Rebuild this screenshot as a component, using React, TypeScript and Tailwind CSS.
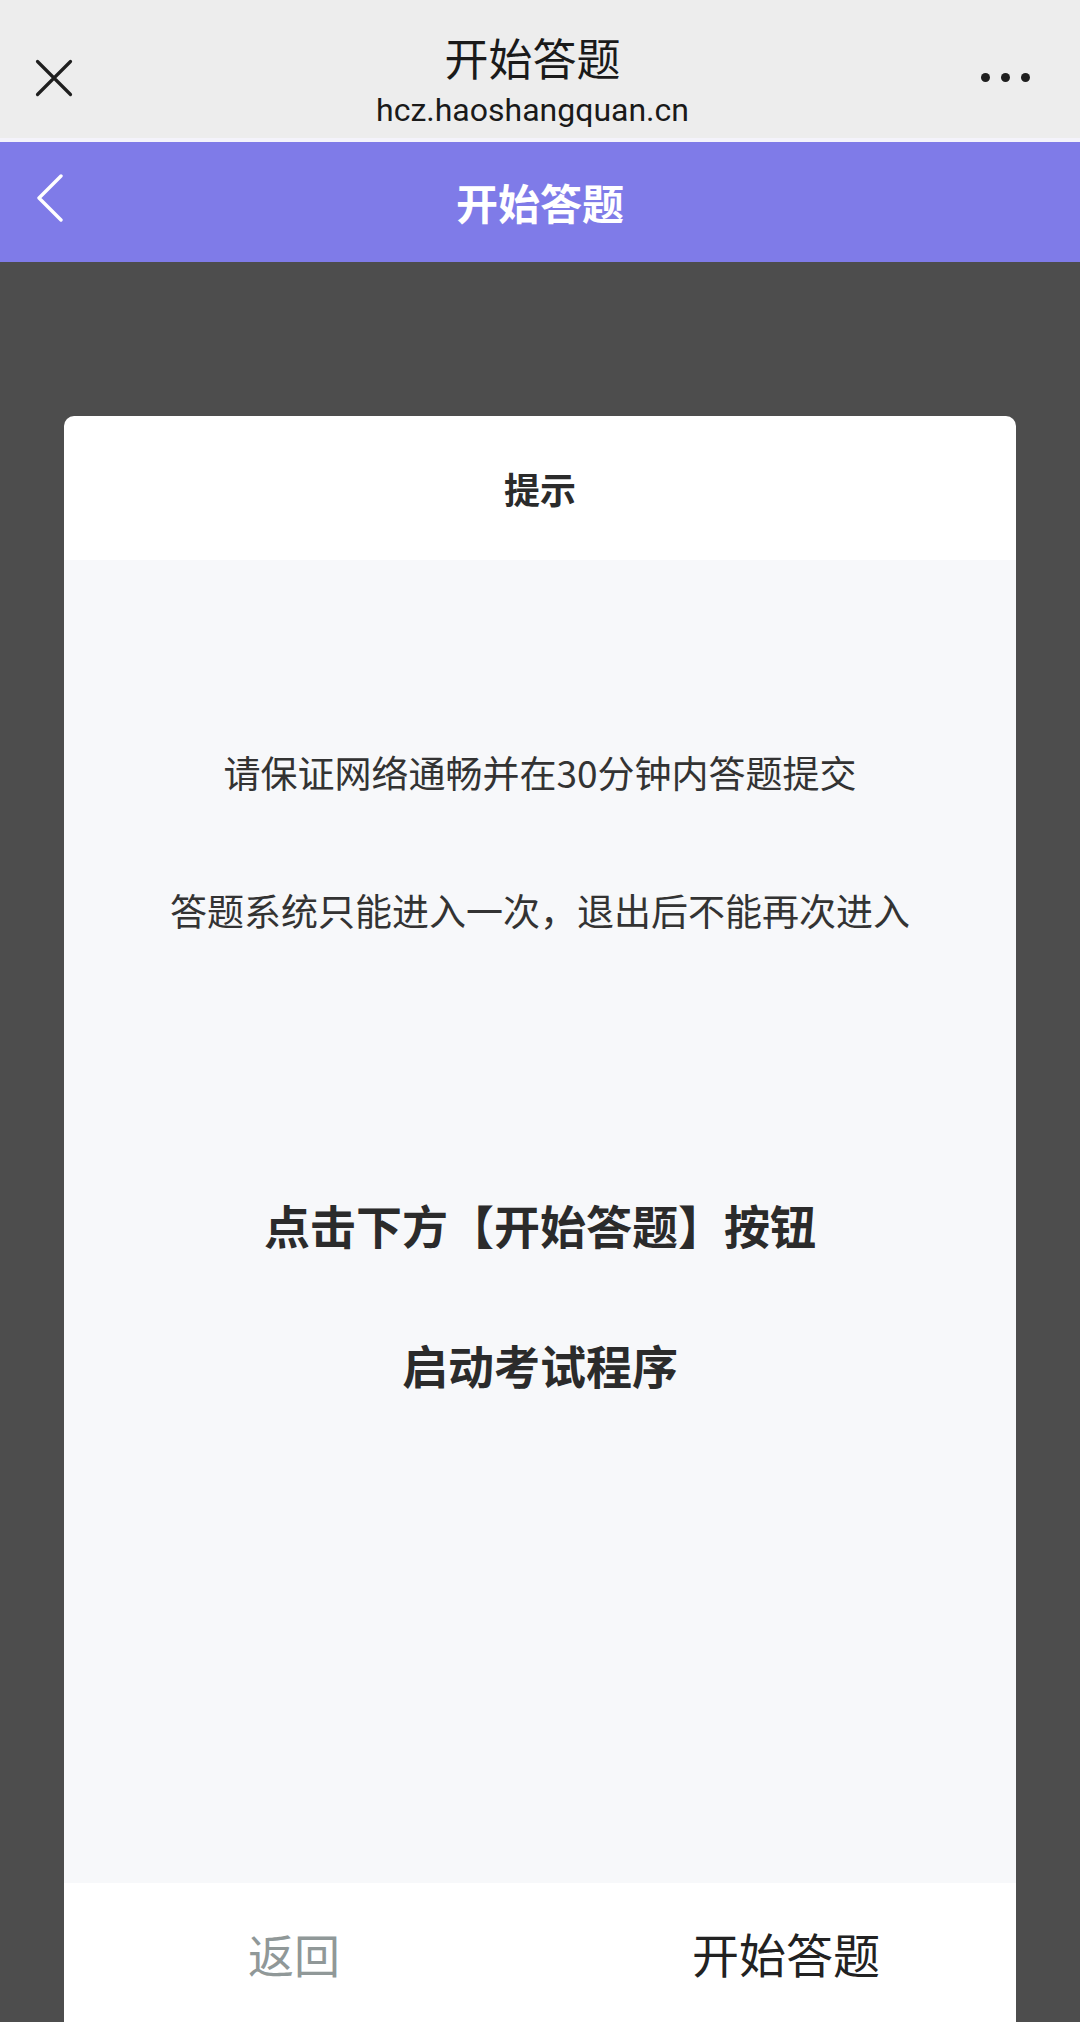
const cjk = "font-['Noto_Sans_CJK_SC','Noto_Sans',sans-serif]";

function CloseIcon() {
  return (
    <svg width="38" height="38" viewBox="0 0 38 38" fill="none" stroke="#1f1f1f" strokeWidth="3.2" strokeLinecap="round">
      <path d="M2.5 2.5 L35.5 35.5 M35.5 2.5 L2.5 35.5" />
    </svg>
  );
}

function BackIcon() {
  return (
    <svg width="28" height="48" viewBox="0 0 28 48" fill="none" stroke="#ffffff" strokeWidth="3.4" strokeLinecap="round" strokeLinejoin="round">
      <path d="M25 2 L3 24 L25 46" />
    </svg>
  );
}

function MoreIcon() {
  return (
    <div className="flex items-center gap-[11px]">
      <span className="h-[9px] w-[9px] rounded-full bg-[#1f1f1f]" />
      <span className="h-[9px] w-[9px] rounded-full bg-[#1f1f1f]" />
      <span className="h-[9px] w-[9px] rounded-full bg-[#1f1f1f]" />
    </div>
  );
}

export default function App() {
  return (
    <div className={`flex h-[2022px] w-[1080px] flex-col overflow-hidden bg-[#4d4d4d] ${cjk}`}>
      {/* WeChat browser bar */}
      <header className="flex h-[138px] shrink-0 items-start justify-between bg-[#ededed] pl-[35px] pr-[50px]">
        <div className="w-[80px] pt-[59px]">
          <CloseIcon />
        </div>
        <div className="flex flex-col items-center pt-[29px]">
          <h1 className="text-[44px] leading-[56px] text-[#1a1a1a]">开始答题</h1>
          <p className="mt-[5px] font-['Roboto',sans-serif] text-[32px] leading-[40px] text-[#1a1a1a]">hcz.haoshangquan.cn</p>
        </div>
        <div className="flex w-[80px] justify-end pt-[73px]">
          <MoreIcon />
        </div>
      </header>
      <div className="h-[4px] shrink-0 bg-[#f4f3fb]" />

      {/* page nav */}
      <nav className="relative flex h-[120px] shrink-0 items-center justify-center bg-[#7f7be8]">
        <div className="absolute left-[36px] top-[32px]">
          <BackIcon />
        </div>
        <span className="text-[42px] font-bold leading-none text-white">开始答题</span>
      </nav>

      {/* dialog */}
      <section className="mx-[64px] mt-[154px] flex flex-1 flex-col overflow-hidden rounded-t-[10px] bg-white">
        <div className="flex h-[144px] shrink-0 items-center justify-center">
          <h2 className="text-[36px] font-bold text-[#2b2b2b]">提示</h2>
        </div>
        <div className="flex h-[1323px] shrink-0 flex-col items-center bg-[#f7f8fa] pt-[190px] text-[#333333]">
          <p className="text-[37px] leading-[44px]">请保证网络通畅并在30分钟内答题提交</p>
          <p className="mt-[94px] text-[37px] leading-[44px]">答题系统只能进入一次，退出后不能再次进入</p>
          <p className="mt-[264px] text-[46px] font-bold leading-[56px] text-[#2b2b2b]">点击下方【开始答题】按钮</p>
          <p className="mt-[84px] text-[46px] font-bold leading-[56px] text-[#2b2b2b]">启动考试程序</p>
        </div>
        <div className="grid h-[140px] shrink-0 grid-cols-2 items-center">
          <button className="pr-[16px] text-center text-[46px] text-[#909898]">返回</button>
          <button className="pl-[16px] text-center text-[47px] text-[#222222]">开始答题</button>
        </div>
      </section>
    </div>
  );
}
